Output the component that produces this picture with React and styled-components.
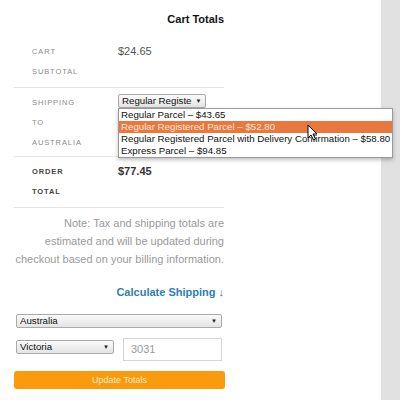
import React from 'react';
import styled, {createGlobalStyle} from 'styled-components';

const GlobalStyle = createGlobalStyle`
  html, body {
    margin: 0;
    padding: 0;
    background: #fff;
  }
  body {
    font-family: "Liberation Sans", Arial, sans-serif;
  }
`;

const Page = styled.div`
  display: flex;
  width: 400px;
  height: 400px;
  overflow: hidden;
`;

const Main = styled.div`
  flex: 1;
  position: relative;
`;

const Strip = styled.div`
  width: 19px;
  background: #e1e1e1;
`;

const Column = styled.div`
  width: 210px;
  margin-left: 14px;
`;

const Title = styled.h2`
  margin: 10px 0 9px;
  font-size: 11px;
  line-height: 18px;
  font-weight: bold;
  color: #111;
  text-align: right;
`;

const Row = styled.div`
  display: grid;
  grid-template-columns: 86px 1fr;
  padding: 5px 0 ${p => p.$bottom || 5}px 18px;
  border-bottom: 1px solid #e6e6e6;
`;

const Label = styled.div`
  font-size: 7.5px;
  letter-spacing: 0.9px;
  line-height: 20px;
  text-transform: uppercase;
  color: ${p => (p.$strong ? '#444' : '#8a8a8a')};
  font-weight: ${p => (p.$strong ? 'bold' : 'normal')};
`;

const Value = styled.div`
  position: relative;
  font-size: 11px;
  line-height: 18px;
  color: ${p => (p.$strong ? '#333' : '#555')};
  font-weight: ${p => (p.$strong ? 'bold' : 'normal')};
`;

const SelectBox = styled.div`
  box-sizing: border-box;
  display: flex;
  align-items: center;
  justify-content: space-between;
  width: ${p => p.$width}px;
  height: 14px;
  margin-top: ${p => p.$top || 0}px;
  padding: 0 4px 0 3px;
  border: 1px solid #a9a9a9;
  border-radius: 2px;
  background: linear-gradient(#fafafa, #e4e4e4);
  font-size: 9.7px;
  line-height: 12px;
  color: #111;
  white-space: nowrap;
  overflow: hidden;
`;

const Caret = styled.span`
  font-size: 6px;
  color: #222;
  margin-left: 4px;
`;

const Popup = styled.div`
  position: absolute;
  left: 0;
  top: 15px;
  z-index: 5;
  background: #fff;
  border: 1px solid #9a9a9a;
  box-shadow: 0 2px 4px rgba(0, 0, 0, 0.25);
`;

const Option = styled.div`
  font-size: 9.7px;
  line-height: 12px;
  padding: 0 2px 0 2px;
  white-space: nowrap;
  color: ${p => (p.$active ? '#fbe6da' : '#111')};
  background: ${p => (p.$active ? '#e9783f' : 'transparent')};
`;

const Cursor = styled.svg`
  position: absolute;
  left: 307px;
  top: 124px;
  z-index: 6;
`;

const Note = styled.p`
  margin: 6px 0 0;
  font-size: 11px;
  line-height: 18px;
  color: #9a9a9a;
  text-align: right;
`;

const CalcLink = styled.a`
  display: block;
  margin-top: 15px;
  font-size: 11px;
  line-height: 18px;
  font-weight: bold;
  color: #2f7db6;
  text-align: right;
  text-decoration: none;
`;

const Form = styled.div`
  display: flex;
  flex-direction: column;
  padding-left: 2px;
  margin-top: 13px;
`;

const FieldRow = styled.div`
  display: flex;
  align-items: flex-start;
  gap: 9px;
  margin-top: 10px;
`;

const PostInput = styled.div`
  box-sizing: border-box;
  width: 99px;
  height: 23px;
  border: 1px solid #d4d4d4;
  padding: 0 7px;
  font-size: 11px;
  line-height: 21px;
  color: #9a9a9a;
`;

const Button = styled.button`
  display: block;
  width: 211px;
  height: 18px;
  margin: 10px 0 0;
  border: none;
  border-radius: 3px;
  background: #f99b0d;
  color: #fde9cc;
  font-family: "Liberation Sans", Arial, sans-serif;
  font-size: 9px;
  padding: 0;
`;

const options = [
  'Regular Parcel – $43.65',
  'Regular Registered Parcel – $52.80',
  'Regular Registered Parcel with Delivery Confirmation – $58.80',
  'Express Parcel – $94.85',
];

const App = () => (
  <Page>
    <GlobalStyle />
    <Main>
      <Column>
        <Title>Cart Totals</Title>
        <Row>
          <Label>Cart<br />Subtotal</Label>
          <Value>$24.65</Value>
        </Row>
        <Row $bottom={3}>
          <Label>Shipping<br />to<br />Australia</Label>
          <Value>
            <SelectBox $width={88} $top={1}>
              Regular Registe<Caret>▼</Caret>
            </SelectBox>
            <Popup>
              {options.map((o, i) => (
                <Option key={o} $active={i === 1}>{o}</Option>
              ))}
            </Popup>
          </Value>
        </Row>
        <Row>
          <Label $strong>Order<br />Total</Label>
          <Value $strong>$77.45</Value>
        </Row>
        <Note>
          Note: Tax and shipping totals are estimated and will be updated during checkout based on your billing information.
        </Note>
        <CalcLink href="#">Calculate Shipping ↓</CalcLink>
        <Form>
          <SelectBox $width={206}>
            Australia<Caret>▼</Caret>
          </SelectBox>
          <FieldRow>
            <SelectBox $width={98} $top={2}>
              Victoria<Caret>▼</Caret>
            </SelectBox>
            <PostInput>3031</PostInput>
          </FieldRow>
        </Form>
        <Button>Update Totals</Button>
      </Column>
      <Cursor width="11" height="17" viewBox="0 0 11 17">
        <path d="M1 1 L1 14 L4 11 L6.5 16 L8.5 15 L6 10 L10 10 Z" fill="#fff" stroke="#000" strokeWidth="1" strokeLinejoin="round" />
      </Cursor>
    </Main>
    <Strip />
  </Page>
);

export default App;
